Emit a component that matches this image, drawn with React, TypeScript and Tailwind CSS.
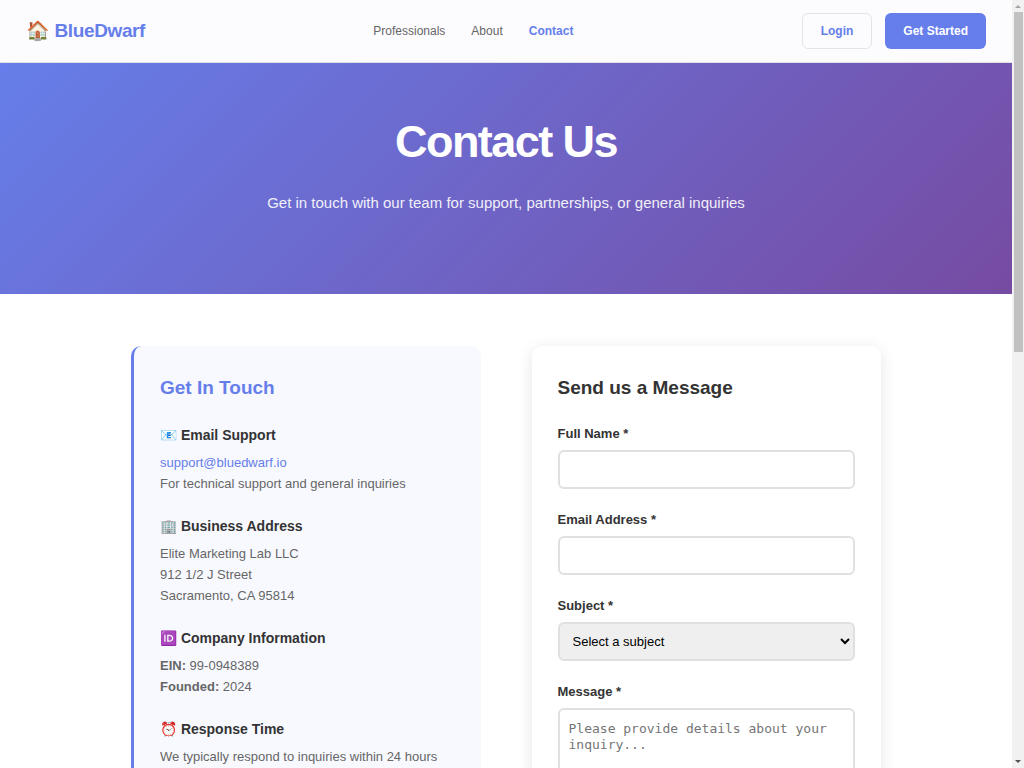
import type { ReactNode } from "react";

function NavLink({ href, active, children }: { href: string; active?: boolean; children: ReactNode }) {
  return (
    <a
      href={href}
      className={active ? "font-bold text-[#667eea]" : "text-[#666666]"}
      aria-current={active ? "page" : undefined}
    >
      {children}
    </a>
  );
}

function Header() {
  return (
    <header className="flex items-center justify-between border-b border-[#e0e0e6] bg-[#fcfcff] px-[26px] py-[13px]">
      <a href="#home" className="text-[19px] leading-7 font-bold tracking-[-0.02em] text-[#667eea]">
        🏠 BlueDwarf
      </a>
      <nav className="flex items-center gap-[26px] text-[12px]">
        <NavLink href="#professionals">Professionals</NavLink>
        <NavLink href="#about">About</NavLink>
        <NavLink href="#contact" active>
          Contact
        </NavLink>
      </nav>
      <div className="flex gap-[13px] text-[12px] font-bold">
        <button type="button" className="h-9 rounded-[6px] border border-[#e1e5e9] px-[18px] text-[#667eea]">
          Login
        </button>
        <button type="button" className="h-9 rounded-[6px] bg-[#667eea] px-[18px] text-white">
          Get Started
        </button>
      </div>
    </header>
  );
}

function InfoBlock({ title, children }: { title: string; children: ReactNode }) {
  return (
    <section className="mb-[21px]">
      <h3 className="mb-[6px] text-[14px] leading-[22px] font-bold text-[#333333]">{title}</h3>
      <div className="text-[13px] leading-[21px] text-[#666666]">{children}</div>
    </section>
  );
}

function Field({ id, label, children }: { id: string; label: string; children: ReactNode }) {
  return (
    <div className="mb-5">
      <label htmlFor={id} className="mb-[6px] block text-[13px] leading-[21px] font-bold text-[#333333]">
        {label}
      </label>
      {children}
    </div>
  );
}

function Scrollbar() {
  return (
    <div aria-hidden="true" className="flex h-full w-3 shrink-0 flex-col items-center bg-[#f1f1f1]">
      <svg viewBox="0 0 12 12" className="size-3 shrink-0">
        <path d="M6 5L9 8H3z" fill="#a3a3a3" />
      </svg>
      <div className="flex w-full flex-1 justify-center">
        <div className="h-[45.7%] w-[9px] bg-[#c1c1c1]" />
      </div>
      <svg viewBox="0 0 12 12" className="size-3 shrink-0">
        <path d="M3 4h6L6 7z" fill="#505050" />
      </svg>
    </div>
  );
}

const control = "block w-full rounded-[6px] border-2 border-[#e0e0e0] text-[13px]";

export default function App() {
  return (
    <div className="flex h-screen bg-white font-['Liberation_Sans',Arial,sans-serif]">
      <div className="min-w-0 flex-1 overflow-y-auto [scrollbar-width:none]">
        <Header />
        <section className="bg-[linear-gradient(135deg,#667eea_0%,#764ba2_100%)] px-[26px] pt-[52px] pb-[76px] text-center text-white">
          <h1 className="mb-[19px] text-[45px] leading-[54px] font-bold tracking-[-0.035em]">Contact Us</h1>
          <p className="text-[15px] leading-[30px] opacity-90">
            Get in touch with our team for support, partnerships, or general inquiries
          </p>
        </section>

        <main className="mx-auto grid max-w-[750px] grid-cols-2 gap-[51px] py-[52px]">
          <div className="rounded-[10px] border-l-[3px] border-[#667eea] bg-[#f8f9ff] p-[26px]">
            <h2 className="mb-[21px] text-[19px] leading-[31px] font-bold text-[#667eea]">Get In Touch</h2>
            <InfoBlock title="📧 Email Support">
              <p>
                <a href="mailto:support@bluedwarf.io" className="text-[#667eea]">
                  support@bluedwarf.io
                </a>
              </p>
              <p>For technical support and general inquiries</p>
            </InfoBlock>
            <InfoBlock title="🏢 Business Address">
              <p>Elite Marketing Lab LLC</p>
              <p>912 1/2 J Street</p>
              <p>Sacramento, CA 95814</p>
            </InfoBlock>
            <InfoBlock title="🆔 Company Information">
              <p>
                <strong>EIN:</strong> 99-0948389
              </p>
              <p>
                <strong>Founded:</strong> 2024
              </p>
            </InfoBlock>
            <InfoBlock title="⏰ Response Time">
              <p>We typically respond to inquiries within 24 hours</p>
            </InfoBlock>
          </div>

          <form className="rounded-[10px] bg-white p-[26px] shadow-[0_3px_16px_rgba(0,0,0,0.1)]">
            <h2 className="mb-5 text-[19px] leading-[31px] font-bold text-[#333333]">Send us a Message</h2>
            <Field id="name" label="Full Name *">
              <input id="name" type="text" required className={`${control} h-[39px] px-[9px]`} />
            </Field>
            <Field id="email" label="Email Address *">
              <input id="email" type="email" required className={`${control} h-[39px] px-[9px]`} />
            </Field>
            <Field id="subject" label="Subject *">
              <select id="subject" required className={`${control} h-[39px] bg-[#efefef] px-[9px] text-black`}>
                <option>Select a subject</option>
              </select>
            </Field>
            <Field id="message" label="Message *">
              <textarea
                id="message"
                required
                placeholder="Please provide details about your inquiry..."
                className={`${control} h-[120px] px-[9px] py-[11px] font-['DejaVu_Sans_Mono',monospace] leading-4 placeholder:text-[#757575]`}
              />
            </Field>
          </form>
        </main>
      </div>
      <Scrollbar />
    </div>
  );
}
